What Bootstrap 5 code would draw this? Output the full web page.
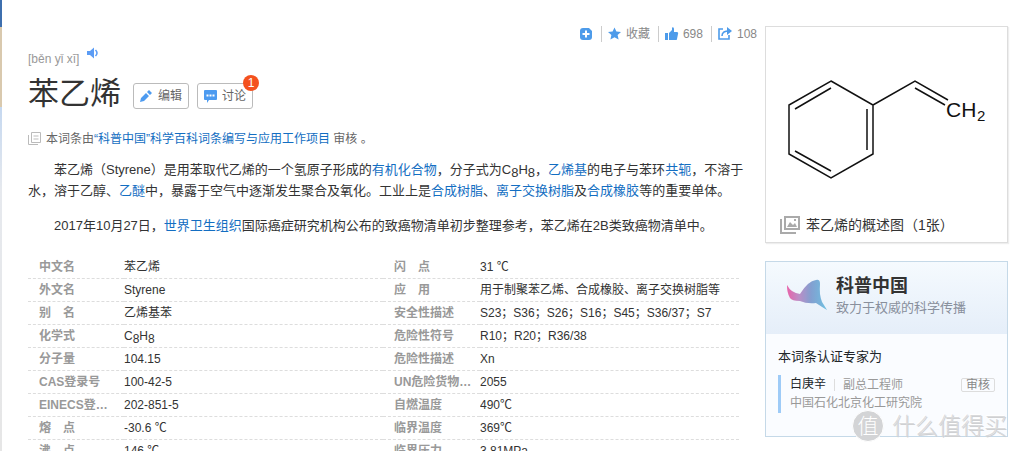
<!DOCTYPE html>
<html lang="zh-CN">
<head>
<meta charset="utf-8">
<meta name="viewport" content="width=device-width, initial-scale=1">
<title>苯乙烯</title>
<link href="https://cdn.jsdelivr.net/npm/bootstrap@5.3.0/dist/css/bootstrap.min.css" rel="stylesheet">
<style>
body{font-family:"Liberation Sans","Noto Sans CJK SC",sans-serif;font-size:12px;line-height:20px;color:#333;background:#fff}
a{color:#136ec2;text-decoration:none}
svg{flex:none;display:block}
.edge-strip{width:2px;background:linear-gradient(#3e6fae 0 27px,#d9c9ae 27px 107px,#c5d8f0 107px,#e6e9ee 190px,#e6e6e6)}
.entry{padding:24px 8px 0 26px;min-width:0}
.tools{color:#888;height:20px}
.tools .tool{color:#888;background:none;border:0;padding:0;line-height:16px}
.tools .tool+.tool{border-left:1px solid #ccc;margin-left:8px;padding-left:6px}
.pinyin{color:#999;font-size:12px;margin-top:5px;height:20px}
.pinyin svg{margin-top:-12px}
.headline{font-size:31px;line-height:46px;font-weight:400;color:#333;margin:2px 12px 0 0}
.tag-btn{border:1px solid #bbb;border-radius:3px;background:#fff;color:#666;font-size:12px;line-height:20px;height:26px;padding:0 6px;margin-top:6px}
.tag-btn-edit{gap:6px}
.count-dot{position:absolute;top:-9px;right:-7px;width:16px;height:16px;border-radius:8px;background:#f4511e;color:#fff;font-size:12px;line-height:16px;text-align:center}
.review{color:#666;margin-top:12px}
.intro{font-size:13px;line-height:21px;text-indent:26px;margin:0 0 14px}
.intro-first{margin-top:10px}
sub{font-size:inherit;bottom:-3px}
.facts{table-layout:fixed;width:calc(100% - 18px);margin-top:20px;border-collapse:separate;border-spacing:0}
.facts th,.facts td{height:23px;line-height:22px;padding:0;border-bottom:1px dashed #ddd;white-space:nowrap;overflow:hidden;text-overflow:ellipsis}
.facts th{color:#999;font-weight:700;padding-left:11px;padding-right:12px}
.facts th+td+th{padding-left:11px;padding-right:0}
.side{width:243px;margin-top:26px;margin-right:10px}
.figure-box{border:1px solid #ddd;box-shadow:1px 1px 1px #eee}
.figure-name{color:#333;font-size:14px;line-height:20px;padding:0 14px 7px}
.expert{border:1px solid #c5d9e8;background:#fafcff;margin-top:18px}
.expert-top{background:linear-gradient(#f5fafe,#e5eef9);height:72px;padding:12px 20px}
.expert-name{font-size:18px;line-height:24px;font-weight:700}
.expert-sub{font-size:13px;line-height:20px;color:#888f9c}
.expert-body{padding:13px 12px 23px}
.person{border-left:3px solid #9ecbf7;margin-top:8px;padding-left:9px;color:#999;line-height:19px}
.role{border-left:1px solid #ddd;line-height:12px;margin-left:8px;padding-left:8px}
.audit{border:1px solid #ddd;border-radius:2px;color:#888;line-height:12px;padding:0 4px}
.stamp{position:absolute;right:0;bottom:-6px;color:#d9dadc;font-size:23px;font-weight:300;line-height:32px;text-shadow:1px 1px 0 #cfd0d2,-1px -1px 0 #fff;white-space:nowrap}
.stamp-disc{width:32px;height:32px;border-radius:16px;background:#d3d4d6;color:#fff;font-size:21px;line-height:30px;text-align:center;text-shadow:none;border:1px solid #fff}
</style>
</head>
<body>
<div class="d-flex vh-100 overflow-hidden">
<div class="edge-strip flex-shrink-0"></div>
<main class="entry flex-grow-1">
  <div class="tools d-flex justify-content-end align-items-center">
    <button class="tool" aria-label="添加"><svg width="13" height="14" viewBox="0 0 13 14"><path fill="#4d9bea" d="M3 1h6l3 3v6a3 3 0 0 1-3 3H3a3 3 0 0 1-3-3V4a3 3 0 0 1 3-3z"/><path stroke="#fff" stroke-width="2" d="M6 3.500v7M2.500 7h7"/></svg></button>
    <button class="tool d-flex align-items-center gap-1"><svg width="14" height="14" viewBox="0 0 14 14"><path fill="#4d9bea" d="m6.500.500 1.900 4 4.600.500-3.400 3.100 1 4.500-4.100-2.300-4.100 2.300 1-4.500L0 5l4.600-.5z"/></svg>收藏</button>
    <button class="tool d-flex align-items-center gap-1"><svg width="14" height="14" viewBox="0 0 14 14"><path fill="#4d9bea" d="M0 6h3v7H0zM4 6l3-3V1c0-1 2-1 2 1v3h3c1 0 1.500 1 1 2l-1 5c0 .6-.4 1-1 1H4z"/></svg>698</button>
    <button class="tool d-flex align-items-center gap-1"><svg width="15" height="14" viewBox="0 0 15 14"><path fill="none" stroke="#4d9bea" stroke-width="1.600" d="M5 2H1v10h10V8M4 9c0-4 3-5 7-5"/><path fill="#4d9bea" d="m9 0 5 4-5 4z"/></svg>108</button>
  </div>
  <div class="pinyin d-flex align-items-center gap-2">[běn yǐ xī]
    <svg width="12" height="12" viewBox="0 0 12 12"><path fill="#5b9cf5" d="M0 4h3l4-3.500v11L3 8H0z"/><path fill="none" stroke="#5b9cf5" stroke-width="1.500" d="M8.500 3q3 3 0 6"/></svg></div>
  <div class="d-flex align-items-center">
    <h1 class="headline">苯乙烯</h1>
    <button class="tag-btn tag-btn-edit d-flex align-items-center me-2"><svg width="12" height="13" viewBox="0 0 12 13"><path fill="#4d9bf0" d="m0 12 1-4 5-5 3 3-5 5zM7 2l2-2 3 3-2 2z"/></svg>编辑</button>
    <button class="tag-btn d-flex align-items-center gap-1 position-relative"><svg width="14" height="13" viewBox="0 0 14 13"><path fill="#4d9bf0" d="M1 0h11q1 0 1 1v8q0 1-1 1H5l-2 3v-3H1q-1 0-1-1V1q0-1 1-1z"/><path fill="#fff" d="M2.500 4.500h2v2h-2zm3 0h2v2h-2zm3 0h2v2h-2z"/></svg>讨论<span class="count-dot">1</span></button>
  </div>
  <div class="review d-flex align-items-center gap-1">
    <svg width="14" height="14" viewBox="0 0 14 14"><path fill="none" stroke="#bbb" d="M3.500.5h9v10h-9zM.5 3v9.500H10M5.500 4h5M5.500 7h5"/></svg>
    <span>本词条由<a href="#">“科普中国”科学百科词条编写与应用工作项目</a> 审核 。</span></div>
  <p class="intro intro-first">苯乙烯（Styrene）是用苯取代乙烯的一个氢原子形成的<a href="#">有机化合物</a>，分子式为C<sub>8</sub>H<sub>8</sub>，<a href="#">乙烯基</a>的电子与苯环<a href="#">共轭</a>，不溶于水，溶于乙醇、<a href="#">乙醚</a>中，暴露于空气中逐渐发生聚合及氧化。工业上是<a href="#">合成树脂</a>、<a href="#">离子交换树脂</a>及<a href="#">合成橡胶</a>等的重要单体。</p>
  <p class="intro">2017年10月27日，<a href="#">世界卫生组织</a>国际癌症研究机构公布的致癌物清单初步整理参考，苯乙烯在2B类致癌物清单中。</p>
  <table class="facts">
    <colgroup><col style="width:96px"><col><col style="width:97px"><col style="width:259px"></colgroup>
    <tr><th>中文名</th><td>苯乙烯</td><th>闪　点</th><td>31 ℃</td></tr>
    <tr><th>外文名</th><td>Styrene</td><th>应　用</th><td>用于制聚苯乙烯、合成橡胶、离子交换树脂等</td></tr>
    <tr><th>别　名</th><td>乙烯基苯</td><th>安全性描述</th><td>S23；S36；S26；S16；S45；S36/37；S7</td></tr>
    <tr><th>化学式</th><td>C<sub>8</sub>H<sub>8</sub></td><th>危险性符号</th><td>R10；R20；R36/38</td></tr>
    <tr><th>分子量</th><td>104.15</td><th>危险性描述</th><td>Xn</td></tr>
    <tr><th>CAS登录号</th><td>100-42-5</td><th>UN危险货物…</th><td>2055</td></tr>
    <tr><th>EINECS登…</th><td>202-851-5</td><th>自燃温度</th><td>490℃</td></tr>
    <tr><th>熔　点</th><td>-30.6 ℃</td><th>临界温度</th><td>369℃</td></tr>
    <tr><th>沸　点</th><td>146 ℃</td><th>临界压力</th><td>3.81MPa</td></tr>
  </table>
</main>
<aside class="side flex-shrink-0">
  <div class="figure-box">
    <svg class="w-100" viewBox="0 0 241 188" role="img" aria-label="苯乙烯结构式"><g fill="none" stroke="#111" stroke-width="1.500"><path d="M65 54 107 78V127L65 151 23 127V78zM107 78 149 54 182 73M149 61 179 78M65 61 29 82M101 82V123M65 144 29 124"/></g><text x="180" y="90" font-size="21" fill="#111">CH</text><text x="211" y="94" font-size="15" fill="#111">2</text></svg>
    <a href="#" class="figure-name d-flex align-items-center gap-1"><svg width="22" height="20" viewBox="0 0 22 20"><path fill="none" stroke="#aaa" stroke-width="2" d="M5 2h14v12H5zM1 4v14h15"/><path fill="#aaa" d="m7 12 3-5 3 3 2-2 2 4zM14 4h2v2h-2z"/></svg>苯乙烯的概述图（1张）</a>
  </div>
  <div class="expert position-relative">
    <div class="expert-top d-flex">
      <svg class="mt-1" width="42" height="36" viewBox="0 0 42 36"><defs><linearGradient id="wing"><stop offset="0" stop-color="#e5489b"/><stop offset=".3" stop-color="#b07bbd"/><stop offset=".6" stop-color="#6d8fc8"/><stop offset="1" stop-color="#55b6dc"/></linearGradient><pattern id="mesh" width="2" height="2" patternUnits="userSpaceOnUse" patternTransform="rotate(25)"><path stroke="#fff" stroke-opacity=".25" stroke-width=".6" d="M0 1h2M1 0v2"/></pattern></defs><path fill="url(#wing)" d="M1 7q4 8 13 9Q22 3 30 2q4-1 4 4-1 11 2 18l5 8q-5-3-11-7-9 1-16-2-8 0-10-3Q1 15 1 7z"/><path fill="url(#mesh)" d="M1 7q4 8 13 9Q22 3 30 2q4-1 4 4-1 11 2 18l5 8q-5-3-11-7-9 1-16-2-8 0-10-3Q1 15 1 7z"/></svg>
      <div class="ms-2"><div class="expert-name">科普中国</div><div class="expert-sub text-nowrap">致力于权威的科学传播</div></div>
    </div>
    <div class="expert-body">
      <div class="expert-sub text-body">本词条认证专家为</div>
      <div class="person">
        <div class="d-flex align-items-center"><span class="text-body">白庚辛</span><span class="role">副总工程师</span><span class="audit ms-auto">审核</span></div>
        <div>中国石化北京化工研究院</div></div>
    </div>
    <div class="stamp d-flex gap-2"><span class="stamp-disc">值</span><span>什么值得买</span></div>
  </div>
</aside>
</div>
<script src="https://cdn.jsdelivr.net/npm/bootstrap@5.3.0/dist/js/bootstrap.bundle.min.js"></script>
</body>
</html>
